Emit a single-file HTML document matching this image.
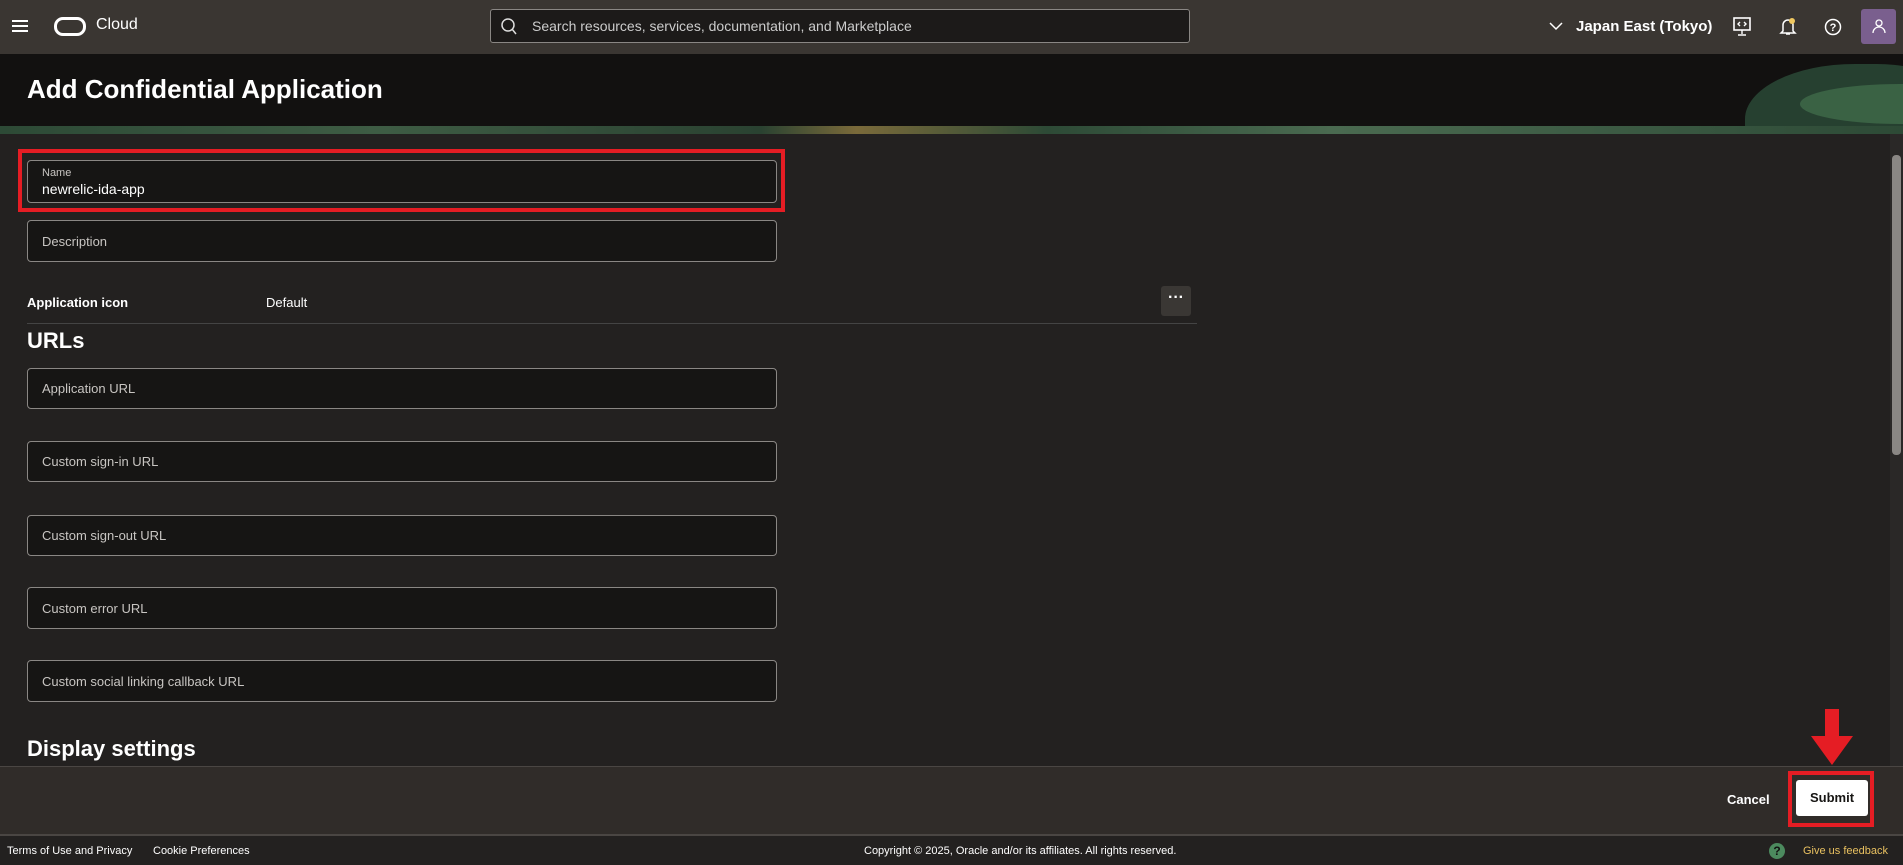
<!DOCTYPE html>
<html><head><meta charset="utf-8"><style>
*{box-sizing:border-box;margin:0;padding:0}
body{width:1903px;height:865px;overflow:hidden;background:#232120;font-family:"Liberation Sans",sans-serif;color:#fff;position:relative}
.abs{position:absolute}
.hdr{left:0;top:0;width:1903px;height:54px;background:#3a3632}
.title{left:0;top:54px;width:1903px;height:72px;background:#121110}
.strip{left:0;top:126px;width:1903px;height:8px;background:linear-gradient(90deg,#2d4a36,#3e5c44 20%,#2a4231 40%,#7a6a3a 45%,#2d4a36 55%,#4a6a50 70%,#2d4a36)}
.inp{position:absolute;left:27px;width:750px;border:1px solid #8a8784;border-radius:4px;background:#161514;color:#c8c5c2;font-size:13px;padding-left:14px;display:flex;align-items:center}
.lbl{font-size:13px;font-weight:bold}
</style></head><body>
<div class="abs hdr"></div>
<div class="abs" style="left:12px;top:20px;width:16px;height:2px;background:#fff;box-shadow:0 5px 0 #fff,0 10px 0 #fff"></div>
<div class="abs" style="left:54px;top:17px;width:32px;height:19px;border:3px solid #fff;border-radius:9px"></div>
<div class="abs" style="left:96px;top:16px;font-size:16px">Cloud</div>
<div class="abs" style="left:490px;top:9px;width:700px;height:34px;border:1px solid #8a8784;border-radius:3px;background:#1c1a19"></div>
<svg class="abs" style="left:500px;top:17px" width="18" height="18"><circle cx="8" cy="8" r="6" stroke="#ddd" fill="none" stroke-width="1.5"/><line x1="12" y1="12" x2="16" y2="17" stroke="#ddd" stroke-width="1.5"/></svg>
<div class="abs" style="left:532px;top:18px;font-size:14px;color:#ccc">Search resources, services, documentation, and Marketplace</div>
<svg class="abs" style="left:1549px;top:21px" width="14" height="10"><path d="M1 2l6 6 6-6" stroke="#fff" fill="none" stroke-width="1.5"/></svg>
<div class="abs" style="left:1576px;top:18px;font-size:15px;font-weight:bold">Japan East (Tokyo)</div>
<svg class="abs" style="left:1733px;top:17px" width="18" height="20"><rect x="1" y="1" width="16" height="12" stroke="#fff" fill="none" stroke-width="1.6"/><path d="M7 5l-2 2 2 2M11 5l2 2-2 2M9 13v4M5 18h8" stroke="#fff" fill="none" stroke-width="1.4"/></svg>
<svg class="abs" style="left:1779px;top:17px" width="18" height="20"><path d="M4 14V8a5 5 0 0 1 10 0v6l2 2H2z M7 17h4" stroke="#fff" fill="none" stroke-width="1.5"/><circle cx="13" cy="4" r="3" fill="#f0c860"/></svg>
<svg class="abs" style="left:1824px;top:18px" width="18" height="18"><circle cx="9" cy="9" r="7.5" stroke="#fff" fill="none" stroke-width="1.5"/><text x="9" y="13" font-size="11" fill="#fff" text-anchor="middle" font-family="Liberation Sans" font-weight="bold">?</text></svg>
<div class="abs" style="left:1861px;top:9px;width:35px;height:35px;background:#7a5f8e;border-radius:3px"></div>
<svg class="abs" style="left:1870px;top:17px" width="18" height="20"><circle cx="9" cy="6" r="3" stroke="#fff" fill="none" stroke-width="1.3"/><path d="M3 16a6 6 0 0 1 12 0" stroke="#fff" fill="none" stroke-width="1.3"/></svg>
<div class="abs title"></div>
<div class="abs" style="left:1745px;top:54px;width:158px;height:72px;overflow:hidden"><div style="position:absolute;left:0;top:10px;width:220px;height:110px;background:#264030;border-radius:50% 40% 0 0"></div><div style="position:absolute;left:55px;top:30px;width:200px;height:40px;background:#3a6244;border-radius:50%"></div></div>
<div class="abs" style="left:27px;top:74px;font-size:26px;font-weight:bold">Add Confidential Application</div>
<div class="abs strip"></div>
<div class="abs" style="left:1890px;top:134px;width:13px;height:632px;background:#2a2827"></div>
<div class="abs" style="left:1892px;top:155px;width:9px;height:300px;background:#8a8784;border-radius:4px"></div>
<div class="abs" style="left:18px;top:149px;width:767px;height:63px;border:4px solid #e51d24"></div>
<div class="inp" style="top:160px;height:43px;display:block;padding-top:6px"><div style="font-size:11px;color:#c8c5c2">Name</div><div style="font-size:14px;color:#fff;margin-top:2px">newrelic-ida-app</div></div>
<div class="inp" style="top:220px;height:42px">Description</div>
<div class="abs lbl" style="left:27px;top:295px">Application icon</div>
<div class="abs" style="left:266px;top:295px;font-size:13px">Default</div>
<div class="abs" style="left:1161px;top:286px;width:30px;height:30px;background:#3a3734;border-radius:3px;text-align:center;font-size:16px;line-height:24px;font-weight:bold">···</div>
<div class="abs" style="left:27px;top:323px;width:1170px;height:1px;background:#444"></div>
<div class="abs" style="left:27px;top:328px;font-size:22px;font-weight:bold">URLs</div>
<div class="inp" style="top:368px;height:41px">Application URL</div>
<div class="inp" style="top:441px;height:41px">Custom sign-in URL</div>
<div class="inp" style="top:515px;height:41px">Custom sign-out URL</div>
<div class="inp" style="top:587px;height:42px">Custom error URL</div>
<div class="inp" style="top:660px;height:42px">Custom social linking callback URL</div>
<div class="abs" style="left:27px;top:736px;font-size:22px;font-weight:bold">Display settings</div>
<div class="abs" style="left:0;top:766px;width:1903px;height:70px;background:#302c29;border-top:1px solid #4a4643;border-bottom:2px solid #4a4643"></div>
<div class="abs" style="left:1727px;top:792px;font-size:13px;font-weight:bold">Cancel</div>
<div class="abs" style="left:1788px;top:771px;width:86px;height:56px;border:4px solid #e51d24"></div>
<div class="abs" style="left:1796px;top:780px;width:72px;height:36px;background:#fff;border-radius:3px;color:#161513;font-size:13px;font-weight:bold;text-align:center;line-height:36px">Submit</div>
<svg class="abs" style="left:1809px;top:709px" width="46" height="58"><path d="M16 0h14v27h14L23 56 2 27h14z" fill="#e51d24"/></svg>
<div class="abs" style="left:7px;top:845px;font-size:11px">Terms of Use and Privacy</div>
<div class="abs" style="left:153px;top:845px;font-size:11px">Cookie Preferences</div>
<div class="abs" style="left:864px;top:845px;font-size:11px">Copyright © 2025, Oracle and/or its affiliates. All rights reserved.</div>
<div class="abs" style="left:1769px;top:843px;width:16px;height:16px;border-radius:50%;background:#4c8a5e;color:#111;font-size:12px;font-weight:bold;text-align:center;line-height:16px">?</div>
<div class="abs" style="left:1803px;top:845px;font-size:11px;color:#e8c060">Give us feedback</div>
</body></html>
